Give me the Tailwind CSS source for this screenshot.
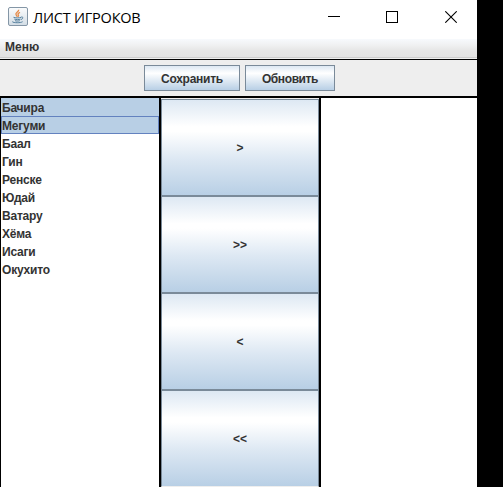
<!DOCTYPE html>
<html lang="ru">
<head>
<meta charset="utf-8">
<title>ЛИСТ ИГРОКОВ</title>
<script src="https://cdn.jsdelivr.net/npm/@tailwindcss/browser@4"></script>
</head>
<body class="bg-black w-[503px] h-[487px] overflow-hidden font-['Liberation_Sans',Arial,sans-serif] text-[12px] font-bold text-[#333333]">
<div class="w-[477px] h-[487px] bg-white flex flex-col">
  <header class="h-[39px] shrink-0 flex items-start">
    <svg class="ml-[8px] mt-[7px] shrink-0" width="20" height="19" viewBox="0 0 20 19" fill="none">
      <defs><linearGradient id="tile" x1="0" y1="0" x2="0" y2="1"><stop stop-color="#fbfcfd"/><stop offset="1" stop-color="#d3dde5"/></linearGradient></defs>
      <rect x=".5" y=".5" width="19" height="18" rx="1.5" fill="url(#tile)" stroke="#8496a6"/>
      <path d="M10.6 2.8c.8 1.9-3.7 2.7-2.6 4.8.3.7 1 1.3 1.3 2.1M12 5.4c-1.5.7-2.6 1.4-1.7 2.6.6.8.2 1.3-.4 1.8" stroke="#e58a48" stroke-width="1.3"/>
      <path d="M5.5 10.3c1.5.8 6 .8 7.6 0M6.3 12.1c1.7.7 4.6.7 6.3 0M7 13.7c1.4.5 3.4.5 4.8 0M13.2 10c2.4-.5 2.1 2-.2 2.5M4.3 14.7c1.2 1.3 8.4 1.4 10.3 0" stroke="#547f9d" stroke-width="1"/>
    </svg>
    <h1 class="ml-[5px] mt-[8px] w-[110px] h-[20px] whitespace-nowrap font-['Open_Sans','Noto_Sans',sans-serif] text-[14.5px] leading-[20px] font-normal text-black tracking-[-0.22px]">ЛИСТ ИГРОКОВ</h1>
    <svg class="ml-[185px] mt-[11px] shrink-0" width="12" height="12" viewBox="0 0 12 12" shape-rendering="crispEdges"><path d="M0 5h12v1H0z" fill="#000"/></svg>
    <svg class="ml-[46px] mt-[11px] shrink-0" width="12" height="12" viewBox="0 0 12 12"><rect x=".5" y=".5" width="11" height="11" fill="none" stroke="#000"/></svg>
    <svg class="ml-[47px] mt-[11px] shrink-0" width="12" height="12" viewBox="0 0 12 12"><path d="M.3.3l11.4 11.4M11.7.3L.3 11.7" stroke="#000" stroke-width="1.1"/></svg>
  </header>
  <nav class="h-[21px] shrink-0 border-b border-black bg-[linear-gradient(to_bottom,#f7fafd_0%,#f0f1f2_30%,#e5e5e5_60%,#e2e2e2_90%,#cccccc_90%,#cccccc_95%,#eeeeee_95%)] pl-[5px] leading-[17px]"><span class="tracking-[0px]">Меню</span></nav>
  <div class="h-[38px] shrink-0 border-b-2 border-black bg-[#eeeeee] pt-[5px] pl-[144px] flex gap-[5px]">
    <button class="w-[96px] h-[26px] shrink-0 border border-[#7a8a99] bg-linear-to-b from-[#dde8f3] from-0% via-white via-30% to-[#b8cfe5] flex items-center justify-center pt-[2px]"><span class="tracking-[-0.25px]">Сохранить</span></button>
    <button class="w-[90px] h-[26px] shrink-0 border border-[#7a8a99] bg-linear-to-b from-[#dde8f3] from-0% via-white via-30% to-[#b8cfe5] flex items-center justify-center pt-[2px]"><span class="tracking-[-0.4px]">Обновить</span></button>
  </div>
  <main class="h-[389px] flex">
    <ul class="w-[161px] shrink-0 border-l border-r-2 border-black leading-[20px] tracking-[-0.2px] [&>li]:h-[18px] [&>li]:pl-px">
      <li class="bg-[#b8cfe5]">Бачира</li>
      <li class="bg-[#b8cfe5] outline outline-1 -outline-offset-1 outline-[#6382bf]">Мегуми</li>
      <li>Баал</li>
      <li>Гин</li>
      <li>Ренске</li>
      <li>Юдай</li>
      <li>Ватару</li>
      <li>Хёма</li>
      <li>Исаги</li>
      <li>Окухито</li>
    </ul>
    <div class="w-[158px] h-[389px] shrink-0 bg-[#eeeeee] pt-px overflow-hidden [&>button]:block [&>button]:w-[158px] [&>button]:h-[97px] [&>button]:border [&>button]:border-[#7a8a99] [&>button]:bg-[linear-gradient(to_bottom,#dde8f3_0%,#ffffff_28%,#ffffff_33%,#dde8f3_62%,#b8cfe5_100%)]">
      <button>&gt;</button>
      <button>&gt;&gt;</button>
      <button>&lt;</button>
      <button class="border-b-[#eeeeee]!">&lt;&lt;</button>
    </div>
    <div class="flex-1 border-l-2 border-black bg-white"></div>
  </main>
</div>
</body>
</html>
